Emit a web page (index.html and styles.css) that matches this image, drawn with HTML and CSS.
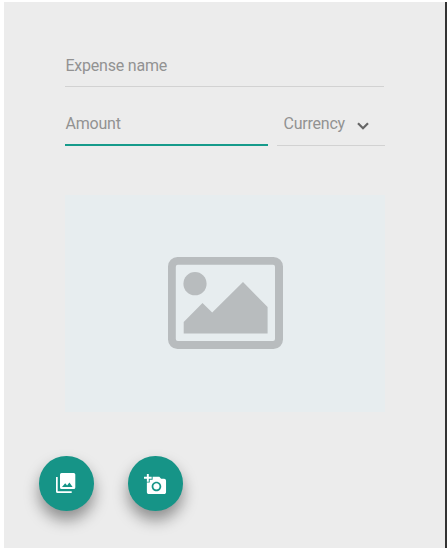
FILE: index.html
```
<!DOCTYPE html>
<html lang="en">
<head>
<meta charset="utf-8">
<title>Expense</title>
<link rel="stylesheet" href="styles.css">
</head>
<body>
<main class="panel">
  <form class="form">
    <div class="field">Expense name</div>
    <div class="row">
      <div class="field field-active">Amount</div>
      <div class="field field-select">
        <span>Currency</span>
        <svg class="chevron" viewBox="0 0 12 8"><path d="M1 1.2 6 6.2 11 1.2"/></svg>
      </div>
    </div>
  </form>
  <div class="preview">
    <svg class="placeholder" viewBox="0 0 115 92">
      <path fill-rule="evenodd" d="M9.500 0H105.500a9.500 9.500 0 0 1 9.500 9.500V82.500a9.500 9.500 0 0 1-9.500 9.500H9.500a9.500 9.500 0 0 1-9.500-9.500V9.500a9.500 9.500 0 0 1 9.500-9.500zM9.800 7.700a2 2 0 0 0-2 2V82a2 2 0 0 0 2 2H105a2 2 0 0 0 2-2V9.700a2 2 0 0 0-2-2z"/>
      <circle cx="27" cy="26.700" r="11.600"/>
      <path d="M15.700 65 34.500 46 44.200 55.500 75 25 99.600 50V76.500H15.700z"/>
    </svg>
  </div>
  <div class="actions">
    <button class="fab" aria-label="Choose photo">
      <svg class="icon-gallery" viewBox="0 0 20 20"><path fill-rule="evenodd" d="M5.500 0H17.800a1.500 1.500 0 0 1 1.500 1.500V14.500a1.500 1.500 0 0 1-1.500 1.500H5.500a1.500 1.500 0 0 1-1.500-1.500V1.500a1.500 1.500 0 0 1 1.500-1.500zM6 14H16.600l-3.200-4.500-2.300 3L9.200 10.300z"/><path d="M0 4H1.700V18.300H15.700V20H1.500a1.500 1.500 0 0 1-1.500-1.500z"/></svg>
    </button>
    <button class="fab" aria-label="Take photo">
      <svg class="icon-camera" viewBox="0 0 24 24"><path d="M3 4V1h2v3h3v2H5v3H3V6H0V4h3zm3 6V7h3V4h7l1.830 2H21c1.100 0 2 .9 2 2v12c0 1.100-.9 2-2 2H5c-1.100 0-2-.9-2-2V10h3zm7 9c2.760 0 5-2.240 5-5s-2.240-5-5-5-5 2.240-5 5 2.240 5 5 5zm-3.200-5c0 1.770 1.430 3.200 3.200 3.200s3.200-1.430 3.200-3.200-1.430-3.200-3.200-3.200-3.200 1.430-3.200 3.200z"/></svg>
    </button>
  </div>
</main>
</body>
</html>
```
FILE: styles.css
```
* {
  box-sizing: border-box;
}

body {
  margin: 0;
  padding: 2px 0 3px 4px;
  background: #fff;
  font-family: Roboto, "Liberation Sans", sans-serif;
}

.panel {
  height: 546px;
  padding: 44px 60px 0 61px;
  background: #ececec;
  border-right: 2px solid #333;
}

.form {
  margin-right: 1px;
}

.field {
  height: 41px;
  padding: 8px 0 0 0.5px;
  border-bottom: 1px solid #d2d2d2;
  color: #929292;
  font-size: 16px;
  line-height: 24px;
  letter-spacing: -0.22px;
}

.row {
  display: grid;
  grid-template-columns: 203px 108px;
  gap: 9px;
  margin-top: 17px;
}

.row .field {
  height: 42px;
}

.row .field-active {
  border-bottom: 2px solid #169b8b;
}

.row .field-select {
  display: flex;
  align-items: flex-start;
  gap: 12px;
  padding-left: 6.5px;
}

.chevron {
  width: 12px;
  height: 8px;
  margin-top: 10px;
  fill: none;
  stroke: #666;
  stroke-width: 2.2;
}

.preview {
  width: 320px;
  height: 217px;
  margin-top: 49px;
  padding: 62px 0 0 103px;
  background: #e7edef;
}

.placeholder {
  display: block;
  width: 115px;
  height: 92px;
  fill: #b8bcbe;
}

.actions {
  display: flex;
  gap: 34.5px;
  margin: 44px 0 0 -26px;
}

.fab {
  display: flex;
  align-items: center;
  justify-content: center;
  width: 54.5px;
  height: 54.5px;
  padding: 0;
  border: 0;
  border-radius: 50%;
  background: #169487;
  box-shadow: 0 9px 15px rgba(0, 0, 0, 0.4);
  fill: #fff;
}

.icon-gallery {
  width: 20px;
  height: 20px;
  margin: 0 1px 0 0;
}

.icon-camera {
  width: 23px;
  height: 23px;
  margin-top: 2px;
}
```
